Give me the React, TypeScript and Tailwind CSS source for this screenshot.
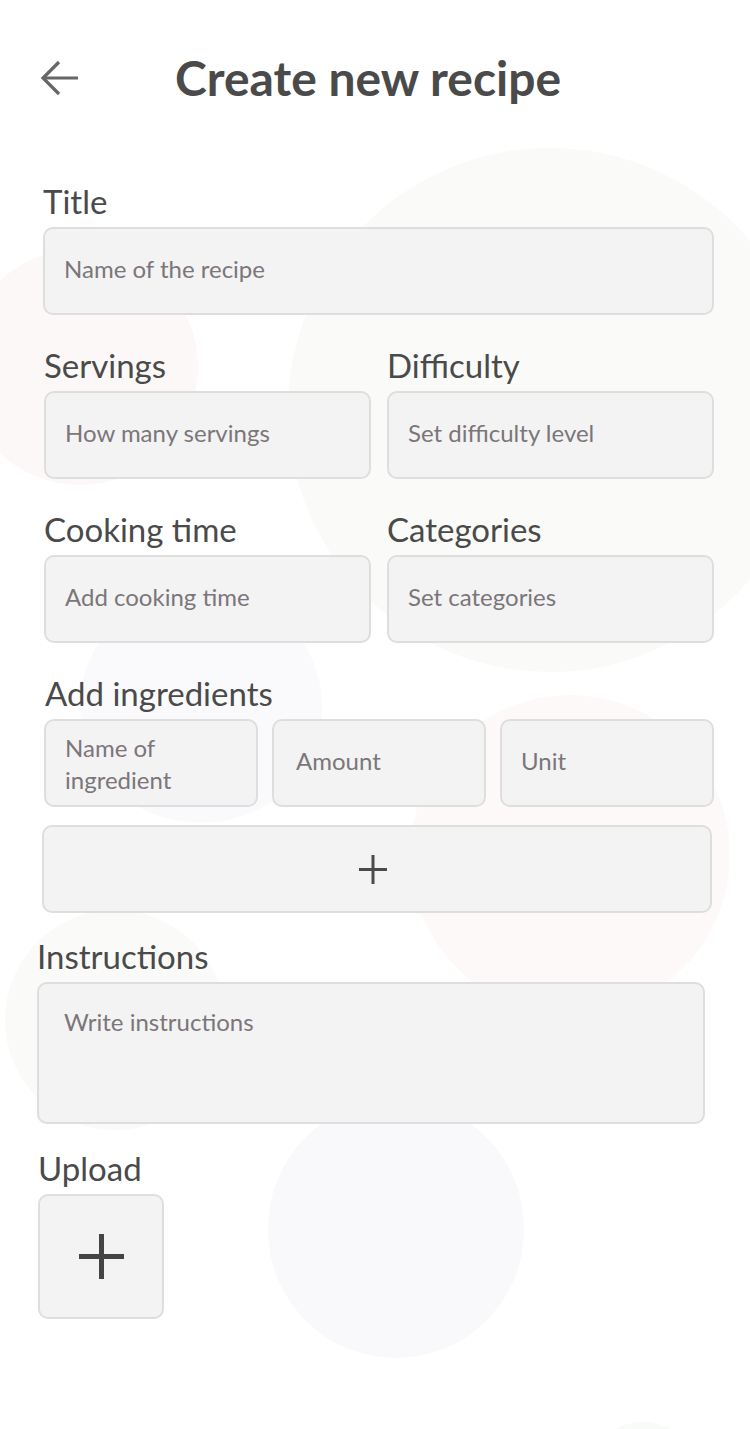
import React from "react";

const labelCls = "block text-[33px] leading-[38px] text-[#4a4a4a] mb-[7px]";
const boxCls =
  "block h-[88px] rounded-[10px] border-2 border-[#dedede] bg-[#f3f3f3] px-[19px] text-[24px] text-[#4a4a4a] placeholder:text-[#7b767a] outline-none";
const fieldCls = `${boxCls} w-full`;
const inputCls = `${fieldCls} pb-[6px]`;

const Blob = ({ className }: { className: string }) => (
  <div className={`absolute rounded-full pointer-events-none ${className}`} />
);

const Field = ({ label, placeholder }: { label: string; placeholder: string }) => (
  <div>
    <label className={labelCls}>{label}</label>
    <input className={inputCls} placeholder={placeholder} />
  </div>
);

export default function App() {
  return (
    <div
      className="relative min-h-[1429px] w-[750px] overflow-hidden bg-white"
      style={{ fontFamily: "Lato, 'Noto Sans', sans-serif" }}
    >
      {/* faint background circles */}
      <Blob className="left-[288px] top-[148px] w-[524px] h-[524px] bg-[#fafbf8]" />
      <Blob className="left-[-38px] top-[249px] w-[236px] h-[236px] bg-[#fdf8f8]" />
      <Blob className="left-[80px] top-[590px] w-[242px] h-[232px] bg-[#fafafc]" />
      <Blob className="left-[410px] top-[695px] w-[320px] h-[320px] bg-[#fdf9f9]" />
      <Blob className="left-[5px] top-[910px] w-[220px] h-[220px] bg-[#fafbf8]" />
      <Blob className="left-[268px] top-[1100px] w-[256px] h-[258px] bg-[#f9f9fb]" />
      <Blob className="left-[583px] top-[1422px] w-[120px] h-[120px] bg-[#f9fbf8]" />

      <div className="relative">
        <header className="flex items-center pt-[49px] pl-[40px]">
          <button className="w-[40px] h-[40px] flex items-center justify-center text-[#666]">
            <svg width="40" height="40" viewBox="0 0 40 40" fill="none" stroke="currentColor" strokeWidth="3.2">
              <path d="M38 20H3" />
              <path d="M19 4L3 20l16 16" />
            </svg>
          </button>
          <h1 className="ml-[95px] text-[48px] leading-[57px] font-bold text-[#4a4a4a]">
            Create new recipe
          </h1>
        </header>

        <form className="mt-[76px] pl-[43px] pr-[36px]">
          <Field label="Title" placeholder="Name of the recipe" />

          <div className="mt-[31px] grid grid-cols-2 gap-x-[16px] pl-px">
            <Field label="Servings" placeholder="How many servings" />
            <Field label="Difficulty" placeholder="Set difficulty level" />
          </div>

          <div className="mt-[31px] grid grid-cols-2 gap-x-[16px] pl-px">
            <Field label="Cooking time" placeholder="Add cooking time" />
            <Field label="Categories" placeholder="Set categories" />
          </div>

          <div className="mt-[31px] pl-px">
            <label className={`${labelCls} pl-[1px]`}>Add ingredients</label>
            <div className="grid grid-cols-3 gap-x-[14px]">
              <textarea
                className={`${fieldCls} resize-none py-[11px] leading-[32px] overflow-hidden`}
                placeholder="Name of ingredient"
              />
              <input className={`${inputCls} pl-[22px]`} placeholder="Amount" />
              <input className={inputCls} placeholder="Unit" />
            </div>
            <button
              type="button"
              className="mt-[18px] -ml-[2px] w-[670px] h-[88px] rounded-[10px] border-2 border-[#dedede] bg-[#f3f3f3] flex items-center justify-center pr-[8px] text-[#4a4a4a]"
            >
              <svg width="28" height="29" viewBox="0 0 28 29" stroke="currentColor" strokeWidth="3">
                <path d="M14 0v29M0 14.5h28" />
              </svg>
            </button>
          </div>

          <div className="mt-[24px] -ml-[6px]">
            <label className={labelCls}>Instructions</label>
            <textarea
              className={`${boxCls} h-[142px] w-[668px] resize-none pt-[22px] pl-[25px] leading-[32px]`}
              placeholder="Write instructions"
            />
          </div>

          <div className="mt-[25px] -ml-[5px]">
            <label className={labelCls}>Upload</label>
            <button
              type="button"
              className="w-[126px] h-[125px] rounded-[10px] border-2 border-[#dedede] bg-[#f3f3f3] flex items-center justify-center text-[#444]"
            >
              <svg width="45" height="45" viewBox="0 0 45 45" stroke="currentColor" strokeWidth="5">
                <path d="M22.5 0v45M0 22.5h45" />
              </svg>
            </button>
          </div>
        </form>
      </div>
    </div>
  );
}
